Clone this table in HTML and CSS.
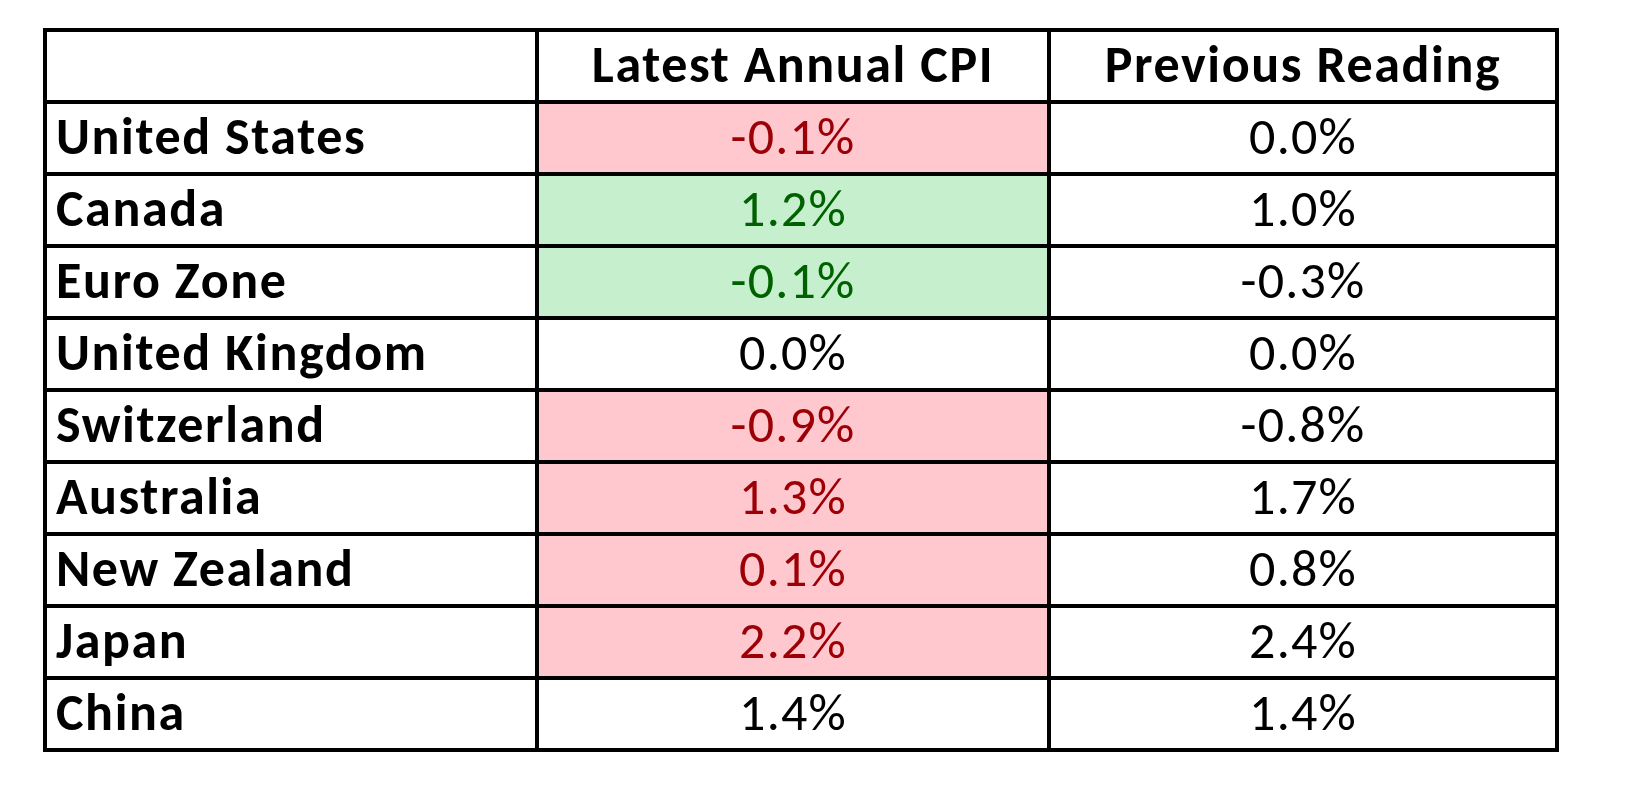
FILE: index.html
```html
<!DOCTYPE html>
<html lang="en">
<head>
<meta charset="utf-8">
<title>Annual CPI</title>
<link rel="stylesheet" href="styles.css">
</head>
<body>
<div class="cpi-table" role="table">
  <div class="cell head"></div>
  <div class="cell head num">Latest Annual CPI</div>
  <div class="cell head num">Previous Reading</div>

  <div class="cell label">United States</div>
  <div class="cell num bad">-0.1%</div>
  <div class="cell num">0.0%</div>

  <div class="cell label">Canada</div>
  <div class="cell num good">1.2%</div>
  <div class="cell num">1.0%</div>

  <div class="cell label">Euro Zone</div>
  <div class="cell num good">-0.1%</div>
  <div class="cell num">-0.3%</div>

  <div class="cell label">United Kingdom</div>
  <div class="cell num">0.0%</div>
  <div class="cell num">0.0%</div>

  <div class="cell label">Switzerland</div>
  <div class="cell num bad">-0.9%</div>
  <div class="cell num">-0.8%</div>

  <div class="cell label">Australia</div>
  <div class="cell num bad">1.3%</div>
  <div class="cell num">1.7%</div>

  <div class="cell label">New Zealand</div>
  <div class="cell num bad">0.1%</div>
  <div class="cell num">0.8%</div>

  <div class="cell label">Japan</div>
  <div class="cell num bad">2.2%</div>
  <div class="cell num">2.4%</div>

  <div class="cell label">China</div>
  <div class="cell num">1.4%</div>
  <div class="cell num">1.4%</div>
</div>
</body>
</html>
```
FILE: styles.css
```css
html, body {
  margin: 0;
  padding: 0;
  background: #ffffff;
}

body {
  font-family: Carlito, Lato, "Open Sans", sans-serif;
  color: #000000;
}

.cpi-table {
  display: grid;
  grid-template-columns: 488px 508px 504px;
  grid-auto-rows: 68px;
  gap: 4px;
  padding: 4px;
  background: #000000;
  width: max-content;
  margin: 28px 0 0 43px;
}

.cell {
  background: #ffffff;
  display: flex;
  align-items: center;
  font-size: 52px;
  line-height: 1;
  padding-bottom: 4px;
  box-sizing: border-box;
  white-space: nowrap;
  letter-spacing: 1.2px;
}

.head {
  font-weight: 700;
  letter-spacing: 1.6px;
}

.label {
  font-weight: 700;
  letter-spacing: 1.6px;
  padding-left: 9px;
}

.num {
  justify-content: center;
}

.bad {
  background: #ffc7ce;
  color: #9c0006;
}

.good {
  background: #c6efce;
  color: #006100;
}
```
